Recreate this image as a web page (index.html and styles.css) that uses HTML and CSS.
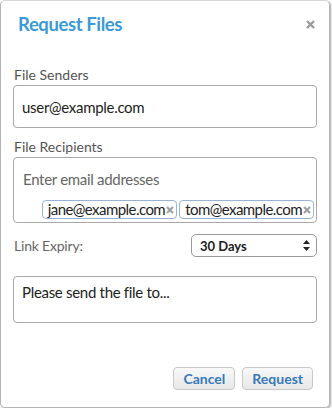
FILE: index.html
```html
<!DOCTYPE html>
<html>
<head>
<meta charset="utf-8">
<link rel="stylesheet" href="styles.css">
</head>
<body>
<div class="dialog">
  <div class="header">
    <h1 class="title">Request Files</h1>
    <svg class="close" width="9" height="9" viewBox="0 0 9 9"><path d="M1 1 L8 8 M8 1 L1 8" stroke="#9a9a9a" stroke-width="2.4"/></svg>
  </div>
  <div class="label">File Senders</div>
  <div class="field sender">user@example.com</div>
  <div class="label gap">File Recipients</div>
  <div class="field recipients">
    <div class="placeholder">Enter email addresses</div>
    <div class="tags">
      <span class="tag">jane@example.com<svg class="x" width="8" height="8" viewBox="0 0 8 8"><path d="M1 1 L7 7 M7 1 L1 7" stroke="#a0a0a0" stroke-width="2.2"/></svg></span>
      <span class="tag">tom@example.com<svg class="x" width="8" height="8" viewBox="0 0 8 8"><path d="M1 1 L7 7 M7 1 L1 7" stroke="#a0a0a0" stroke-width="2.2"/></svg></span>
    </div>
  </div>
  <div class="expiry">
    <span class="expiry-label">Link Expiry:</span>
    <div class="select">
      <span>30 Days</span>
      <svg class="arrows" width="7" height="11" viewBox="0 0 7 11"><path d="M3.5 0 L7 4 L0 4 Z M0 7 L7 7 L3.5 11 Z" fill="#222"/></svg>
    </div>
  </div>
  <div class="field message">Please send the file to...</div>
  <div class="actions">
    <button class="btn">Cancel</button>
    <button class="btn">Request</button>
  </div>
</div>
</body>
</html>
```
FILE: styles.css
```css
html, body {
  margin: 0;
  padding: 0;
  background: #fff;
}
body {
  font-family: Lato, "Open Sans", sans-serif;
}
.dialog {
  box-sizing: border-box;
  width: 330px;
  height: 408px;
  border: 1px solid #b4b4b4;
  border-top-color: #d6d6d6;
  border-radius: 5px;
  box-shadow: 1px 1px 2px rgba(0,0,0,0.35);
  padding: 0 12px;
  display: flex;
  flex-direction: column;
}
.header {
  height: 44px;
  display: flex;
  align-items: center;
  justify-content: space-between;
  padding: 0 2px 0 5px;
}
.title {
  margin: 0;
  font-size: 18.5px;
  font-weight: bold;
  color: #3a9ad6;
  padding-top: 2px;
  letter-spacing: -0.4px;
}
.close {
  margin-top: 3px;
  flex-shrink: 0;
}
.label {
  margin-top: 20px;
  height: 20px;
  line-height: 20px;
  font-size: 14px;
  color: #555;
  padding-left: 1px;
}
.label.gap {
  margin-top: 9px;
}
.field {
  box-sizing: border-box;
  border: 1px solid #a8a8a8;
  border-radius: 4px;
  color: #222;
  font-size: 15px;
  letter-spacing: -0.3px;
}
.sender {
  height: 43px;
  padding: 0 8px;
  display: flex;
  align-items: center;
}
.recipients {
  height: 66px;
  padding: 10px 2px 0 9px;
}
.placeholder {
  color: #666;
  height: 22px;
  line-height: 22px;
}
.tags {
  margin-top: 10px;
  display: flex;
  justify-content: flex-end;
  gap: 2px;
}
.tag {
  box-sizing: border-box;
  height: 19px;
  line-height: 17px;
  border: 1px solid #98b4d4;
  border-radius: 4px;
  padding: 0 2px 0 5px;
  color: #222;
  font-size: 15px;
  letter-spacing: -0.55px;
  display: inline-flex;
  align-items: center;
  flex-shrink: 0;
}
.x {
  margin-left: 1px;
  flex-shrink: 0;
}
.expiry {
  margin-top: 11px;
  display: flex;
  align-items: center;
  justify-content: space-between;
}
.expiry-label {
  color: #666;
  font-size: 14px;
  padding-left: 1px;
  letter-spacing: -0.2px;
}
.select {
  box-sizing: border-box;
  width: 126px;
  height: 23px;
  border: 1px solid #999;
  border-radius: 5px;
  display: flex;
  align-items: center;
  justify-content: space-between;
  padding: 0 6px 0 8px;
  font-size: 13px;
  font-weight: bold;
  color: #222;
}
.message {
  margin-top: 19px;
  height: 47px;
  padding: 6px 8px;
}
.actions {
  margin-top: auto;
  margin-bottom: 17px;
  display: flex;
  justify-content: flex-end;
  gap: 7px;
  padding-right: 4px;
}
.btn {
  box-sizing: border-box;
  height: 23px;
  border: 1px solid #c8c8c8;
  border-radius: 4px;
  background: linear-gradient(#f8f8f8, #e8e8e8);
  color: #3878b8;
  font-family: inherit;
  font-weight: bold;
  font-size: 14px;
  padding: 0 9px;
}
```
